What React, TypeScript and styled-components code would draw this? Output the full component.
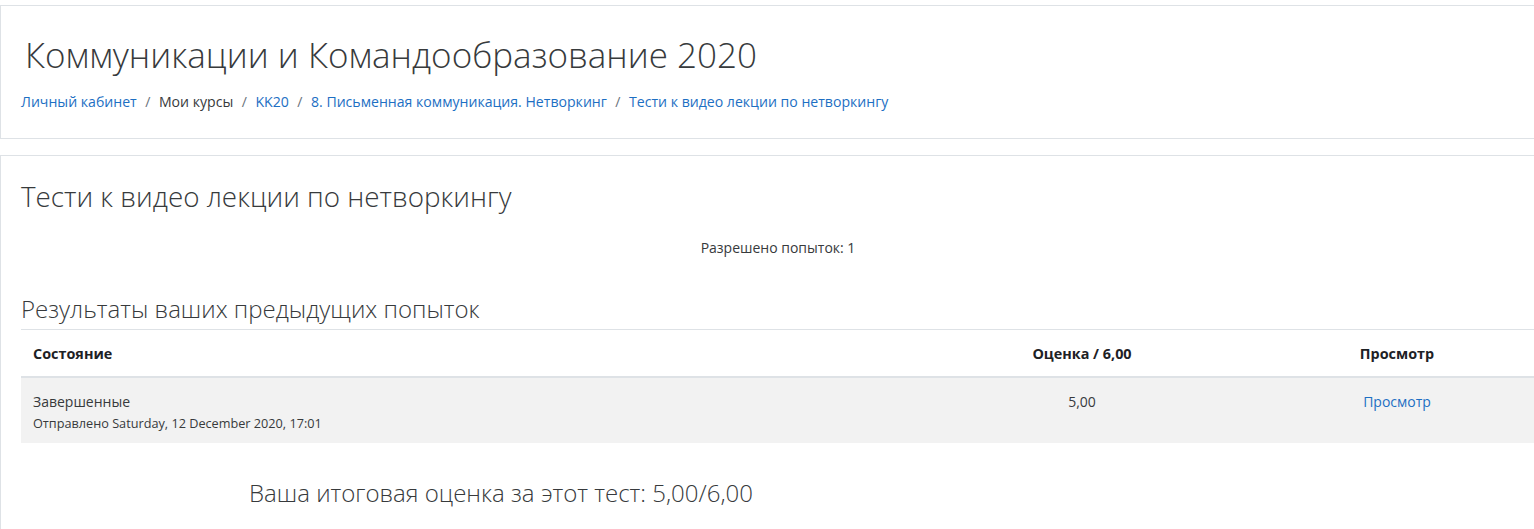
import React from "react";
import styled, { createGlobalStyle } from "styled-components";

const Global = createGlobalStyle`
  html, body { margin: 0; padding: 0; background: #fff; overflow: hidden; }
  body { font-family: "Open Sans", "Noto Sans", sans-serif; color: #373a3c; font-size: 14px; }
`;

const Page = styled.div`
  width: 1556px;
  padding-top: 5px;
  display: flex;
  flex-direction: column;
  gap: 16px;
`;

const Card = styled.section<{ $pad: string }>`
  border: 1px solid #dee2e6;
  border-right: none;
  padding: ${(p) => p.$pad};
  background: #fff;
`;

const CourseTitle = styled.h1`
  margin: 0 0 0 4px;
  font-weight: 300;
  font-size: 35px;
  line-height: 44px;
  color: #373a3c;
`;

const Crumbs = styled.nav`
  margin-top: 15px;
  display: flex;
  align-items: center;
  font-size: 14.1px;
  line-height: 20px;
`;

const Crumb = styled.a<{ $plain?: boolean }>`
  color: ${(p) => (p.$plain ? "#373a3c" : "#1d6fc3")};
  text-decoration: none;
`;

const Sep = styled.span`
  color: #6a737b;
  padding: 0 8.5px;
`;

const QuizTitle = styled.h2`
  margin: 0;
  font-weight: 300;
  font-size: 27.8px;
  line-height: 36px;
  color: #373a3c;
`;

const Info = styled.p`
  margin: 24px 0 0;
  text-align: center;
  font-size: 14px;
  line-height: 20px;
  width: 1514px;
`;

const SectionTitle = styled.h3`
  margin: 35px 0 0;
  font-weight: 300;
  font-size: 24px;
  line-height: 32px;
  color: #373a3c;
`;

const Table = styled.div`
  margin-top: 4px;
  width: 1514px;
  display: grid;
  grid-template-columns: 884px 354px 276px;
`;

const HeadCell = styled.div<{ $align?: string }>`
  border-top: 1px solid #dee2e6;
  border-bottom: 2px solid #dee2e6;
  padding: 0 12px;
  height: 46px;
  display: flex;
  align-items: center;
  justify-content: ${(p) => p.$align || "flex-start"};
  font-weight: 700;
  font-size: 14.4px;
  color: #1d2125;
`;

const Cell = styled.div<{ $align?: string }>`
  background: #f2f2f2;
  padding: 13px 12px 12px;
  height: 65px;
  box-sizing: border-box;
  display: flex;
  flex-direction: column;
  align-items: ${(p) => p.$align || "flex-start"};
  font-size: 14px;
  line-height: 22px;
`;

const Sub = styled.span`
  font-size: 12.7px;
  line-height: 20px;
`;

const Link = styled.a`
  color: #1d6fc3;
  text-decoration: none;
`;

const FinalGrade = styled.h3`
  margin: 34px 0 0 228px;
  font-weight: 300;
  font-size: 24px;
  line-height: 32px;
  color: #373a3c;
`;

export default function App() {
  return (
    <>
      <Global />
      <Page>
        <Card $pad="27px 20px 26px">
          <CourseTitle>Коммуникации и Командообразование 2020</CourseTitle>
          <Crumbs>
            <Crumb href="#">Личный кабинет</Crumb>
            <Sep>/</Sep>
            <Crumb $plain>Мои курсы</Crumb>
            <Sep>/</Sep>
            <Crumb href="#">KK20</Crumb>
            <Sep>/</Sep>
            <Crumb href="#">8. Письменная коммуникация. Нетворкинг</Crumb>
            <Sep>/</Sep>
            <Crumb href="#">Тести к видео лекции по нетворкингу</Crumb>
          </Crumbs>
        </Card>
        <Card $pad="22px 20px 40px">
          <QuizTitle>Тести к видео лекции по нетворкингу</QuizTitle>
          <Info>Разрешено попыток: 1</Info>
          <SectionTitle>Результаты ваших предыдущих попыток</SectionTitle>
          <Table>
            <HeadCell>Состояние</HeadCell>
            <HeadCell $align="center">Оценка / 6,00</HeadCell>
            <HeadCell $align="center">Просмотр</HeadCell>
            <Cell>
              Завершенные
              <Sub>Отправлено Saturday, 12 December 2020, 17:01</Sub>
            </Cell>
            <Cell $align="center">5,00</Cell>
            <Cell $align="center">
              <Link href="#">Просмотр</Link>
            </Cell>
          </Table>
          <FinalGrade>Ваша итоговая оценка за этот тест: 5,00/6,00</FinalGrade>
        </Card>
      </Page>
    </>
  );
}
